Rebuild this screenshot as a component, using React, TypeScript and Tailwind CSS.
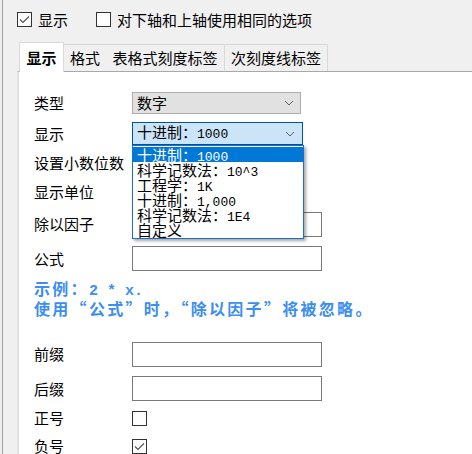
import React from "react";

// split text so that ASCII runs get a half-width mono face, like SimSun
function Mixed({ text, mono }: { text: string; mono: string }) {
  return (
    <>
      {text.split(/([\x20-\x7e]+)/).map((part, i) =>
        /[\x20-\x7e]/.test(part) ? (
          <span key={i} className={mono}>
            {part}
          </span>
        ) : (
          <span key={i}>{part}</span>
        ),
      )}
    </>
  );
}

function Checkbox({ checked = false }: { checked?: boolean }) {
  return (
    <div className="w-[15px] h-[15px] shrink-0 border border-[#333333] bg-white flex items-center justify-center">
      {checked && (
        <svg width="11" height="9" viewBox="0 0 11 9">
          <polyline points="1,4.5 4,7.5 10,1.5" fill="none" stroke="#555555" strokeWidth="1.2" />
        </svg>
      )}
    </div>
  );
}

function Chevron() {
  return (
    <svg width="10" height="6" viewBox="0 0 10 6" className="shrink-0">
      <polyline points="1,1 5,5 9,1" fill="none" stroke="#606060" strokeWidth="1" />
    </svg>
  );
}

const options = [
  "十进制：1000",
  "科学记数法：10^3",
  "工程学：1K",
  "十进制：1,000",
  "科学记数法：1E4",
  "自定义",
];

const listMono = "font-['Liberation_Mono',monospace] text-[13px] whitespace-pre";
const blueMono = "font-['Liberation_Mono',monospace] text-[15px] whitespace-pre tracking-normal";

function Row({ label, h, children }: { label: string; h: string; children?: React.ReactNode }) {
  return (
    <div className={"flex items-center " + h}>
      <div className="w-[98px] shrink-0 leading-[16px]">{label}</div>
      {children}
    </div>
  );
}

function TextBox() {
  return <div className="w-[190px] h-[25px] border border-[#7a7a7a] bg-white" />;
}

export default function App() {
  return (
    <div className="w-[472px] h-[454px] overflow-hidden bg-[#f0f0f0] flex font-['Noto_Sans_CJK_SC',sans-serif] text-[15px] text-black">
      <div className="w-[2px] shrink-0" />
      <div className="flex-1 flex flex-col border-l border-[#a0a0a0]">
        {/* top checkboxes */}
        <div className="flex items-center h-[15px] mt-[12px] pl-[14px]">
          <Checkbox checked />
          <span className="ml-[6px] leading-[15px]">显示</span>
          <div className="ml-[28px]">
            <Checkbox />
          </div>
          <span className="ml-[6px] leading-[15px]">对下轴和上轴使用相同的选项</span>
        </div>

        {/* tabs */}
        <div className="flex items-end h-[29px] mt-[15px] ml-[16px]">
          <div className="relative z-10 w-[45px] h-[30px] -mb-px bg-white border-l border-r border-t border-[#d9d9d9] flex items-center justify-center font-bold leading-[16px]">
            显示
          </div>
          <div className="w-[42px] h-[27px] border-t border-[#d9d9d9] flex items-center justify-center leading-[16px]">
            格式
          </div>
          <div className="w-[119px] h-[27px] border-t border-r border-[#d9d9d9] flex items-center justify-center leading-[16px]">
            表格式刻度标签
          </div>
          <div className="w-[103px] h-[27px] border-t border-r border-[#d9d9d9] flex items-center justify-center leading-[16px]">
            次刻度线标签
          </div>
        </div>

        {/* panel */}
        <div className="flex-1 ml-[14px] bg-white border-l-2 border-l-[#e3e3e3] border-t border-t-[#a8a8ae] pt-[16px] pl-[15px]">
          <Row label="类型" h="h-[30px]">
            <div className="w-[169px] h-[22px] bg-[#e1e1e1] border border-[#adadad] flex items-center pl-[4px] pr-[6px]">
              <span className="flex-1 leading-[16px]">数字</span>
              <Chevron />
            </div>
          </Row>

          <Row label="显示" h="h-[31px]">
            <div className="relative">
              <div className="w-[171px] h-[23px] bg-[#cce4f7] border border-[#005499] flex items-center pl-[4px] pr-[7px]">
                <span className="flex-1 leading-[16px]">
                  <Mixed text="十进制：1000" mono={listMono} />
                </span>
                <Chevron />
              </div>
              {/* open dropdown list */}
              <div className="absolute z-20 left-0 top-full w-[172px] bg-white border border-[#1d6ec4] shadow-[2px_2px_3px_rgba(0,0,0,0.35)] py-px">
                {options.map((o, i) => (
                  <div
                    key={o}
                    className={
                      "h-[15px] leading-[15px] pl-[4px] whitespace-nowrap " +
                      (i === 0 ? "bg-[#0078d7] text-white" : "text-black")
                    }
                  >
                    <Mixed text={o} mono={listMono} />
                  </div>
                ))}
              </div>
            </div>
          </Row>

          <Row label="设置小数位数" h="h-[27px]" />
          <Row label="显示单位" h="h-[31px]" />

          <Row label="除以因子" h="h-[34px]">
            <TextBox />
          </Row>
          <Row label="公式" h="h-[35px]">
            <TextBox />
          </Row>

          <div className="mt-[4px] text-[16px] font-bold leading-[17px] text-[#3c8ef0] tracking-[2.3px] [font-feature-settings:'fwid']">
            <div>
              <Mixed text="示例：2 * x." mono={blueMono} />
            </div>
            <div className="whitespace-nowrap">使用“公式”时，“除以因子”将被忽略。</div>
          </div>

          <div className="h-[20px]" />

          <Row label="前缀" h="h-[34px]">
            <TextBox />
          </Row>
          <Row label="后缀" h="h-[35px]">
            <TextBox />
          </Row>
          <Row label="正号" h="h-[24px]">
            <Checkbox />
          </Row>
          <Row label="负号" h="h-[32px]">
            <Checkbox checked />
          </Row>
        </div>
      </div>
    </div>
  );
}
